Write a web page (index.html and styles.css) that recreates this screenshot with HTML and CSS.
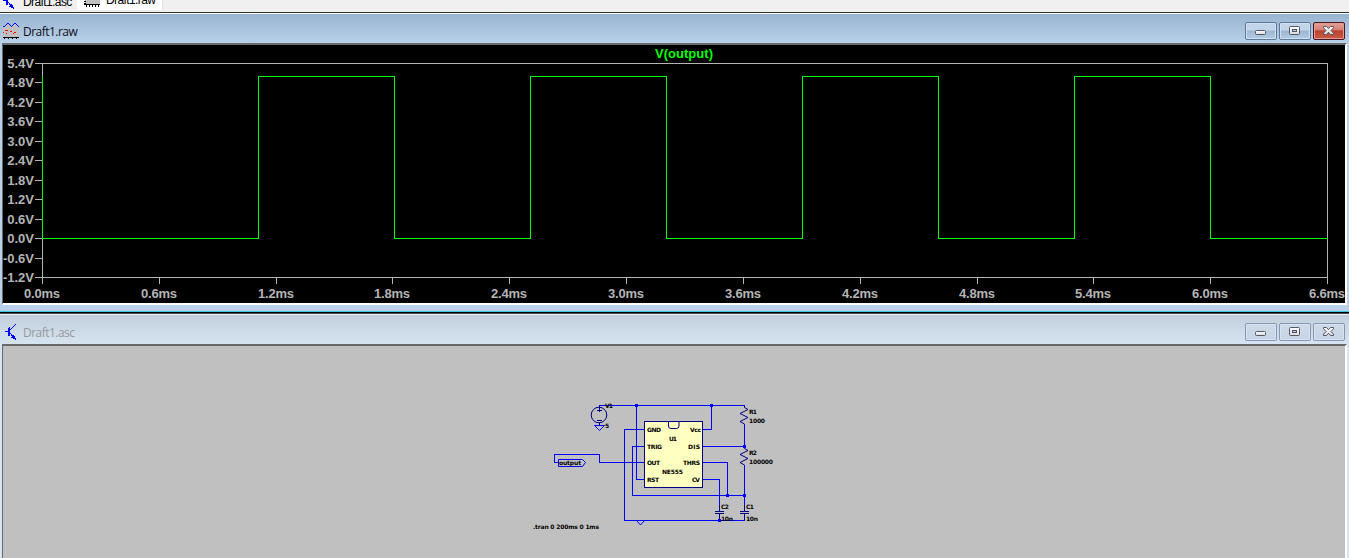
FILE: index.html
```html
<!DOCTYPE html>
<html lang="en">
<head>
<meta charset="utf-8">
<title>Draft1</title>
<link rel="stylesheet" href="styles.css">
</head>
<body>
<svg class="defs" width="0" height="0">
  <defs>
    <linearGradient id="face" x1="0" y1="0" x2="0" y2="1"><stop offset="0" stop-color="#fff"/><stop offset="1" stop-color="#d8d8d8"/></linearGradient>
    <g id="transistor" fill="#00f" shape-rendering="crispEdges">
      <path d="M0 7h4v1H0zM4 3h1v9H4zM3 4h1v8H3zM5 5h1v1H5zM6 4h1v1H6zM7 3h1v1H7zM8 2h1v1H8zM9 1h1v1H9zM10 0h1v1h-1zM5 9h1v1H5zM6 10h1v2H6zM7 11h2v2H7zM9 12h1v3H9zM6 13h3v1H6zM8 14h3v1H8zM10 15h1v1h-1z"/>
    </g>
    <g id="min"><rect x=".5" y=".5" width="10" height="4" rx="1" fill="url(#face)" stroke="#535666"/></g>
    <g id="max"><rect x=".5" y=".5" width="10" height="8" rx="1" fill="url(#face)" stroke="#535666"/><rect x="3.500" y="3.500" width="4" height="2" fill="#b5c9dc" stroke="#535666"/></g>
    <g id="close"><path d="M.5.5h3l2 2.200 2-2.200h3v1.300L8 4.500l2.500 2.700v1.300h-3l-2-2.200-2 2.200h-3V7.200L3 4.500.5 1.800z" fill="url(#face)" stroke="#535666"/></g>
    <g id="resistor"><path d="M0 0v2l3.500 2-8 4 8 4-8 4 4.500 2.500"/></g>
  </defs>
</svg>

<div class="tabs">
  <div class="tab"><svg class="tab-icon" width="16" height="16"><use href="#transistor"/></svg><span class="tab-text">Draft1.asc</span></div>
  <div class="tab tab-active"><svg class="tab-icon" width="17" height="16" shape-rendering="crispEdges"><path fill="#c0c0c0" d="M2 0h15v13H2z"/><path fill="#000" d="M1 13h16v1H1zM1 10h2v1H1zM1 12h2v1H1zM3 14h1v2H3zM6 14h1v2H6zM9 14h1v2H9zM12 14h1v2h-1zM15 14h1v2h-1z"/></svg><span class="tab-text">Draft1.raw</span></div>
</div>

<section class="window window-plot">
  <header class="titlebar">
    <svg class="win-icon" width="16" height="16" shape-rendering="crispEdges">
      <path fill="#c0c0c0" d="M0 3h16v12H0zM3 1h4v2H3zM10 1h4v2h-4z"/>
      <path fill="#00f" d="M0 3h2v1H0zM2 2h1v1H2zM3 1h1v1H3zM4 0h2v1H4zM6 1h1v1H6zM7 2h1v1H7zM8 3h1v1H8zM9 2h1v1H9zM10 1h1v1h-1zM11 0h2v1h-2zM13 1h1v1h-1zM14 2h1v1h-1zM15 3h1v1h-1z"/>
      <path fill="red" d="M2 7h3v1H2zM0 9h1v1H0zM7 8h2v1H7zM11 9h2v1h-2zM3 10h1v1H3zM10 10h1v1h-1z"/>
      <path fill="#000" d="M0 14h16v1H0zM1 15h1v1H1zM5 15h1v1H5zM9 15h1v1H9zM13 15h1v1h-1z"/>
    </svg>
    <span class="title">Draft1.raw</span>
    <div class="buttons">
      <span class="button"><svg width="11" height="5" class="glyph-min"><use href="#min"/></svg></span>
      <span class="button"><svg width="11" height="9"><use href="#max"/></svg></span>
      <span class="button button-close"><svg width="11" height="9"><use href="#close"/></svg></span>
    </div>
  </header>
  <div class="client client-plot">
    <svg class="plot" width="1342" height="258" viewBox="3 45 1342 258">
      <g class="axis" shape-rendering="crispEdges">
        <path d="M35 63.500H1327.500V284M42.500 63V284M35 277.500H1328"/>
        <path d="M35 82.500h7M35 102.500h7M35 121.500h7M35 141.500h7M35 160.500h7M35 180.500h7M35 199.500h7M35 219.500h7M35 238.500h7M35 258.500h7"/>
        <path d="M159.500 277v7M276.500 277v7M392.500 277v7M509.500 277v7M626.500 277v7M743.500 277v7M860.500 277v7M977.500 277v7M1093.500 277v7M1210.500 277v7"/>
      </g>
      <path class="trace" shape-rendering="crispEdges" d="M42.500 76V238.500H258.500V76.500H394.500V238.500H530.500V76.500H666.500V238.500H802.500V76.500H938.500V238.500H1074.500V76.500H1210.500V238.500H1328"/>
      <text class="trace-name" x="655" y="58" textLength="58">V(output)</text>
      <g class="label label-y">
        <text x="34" y="68">5.4V</text><text x="34" y="87">4.8V</text><text x="34" y="107">4.2V</text><text x="34" y="126">3.6V</text><text x="34" y="146">3.0V</text><text x="34" y="165">2.4V</text><text x="34" y="185">1.8V</text><text x="34" y="204">1.2V</text><text x="34" y="224">0.6V</text><text x="34" y="243">0.0V</text><text x="34" y="263">-0.6V</text><text x="34" y="282">-1.2V</text>
      </g>
      <g class="label label-x">
        <text x="42" y="298" textLength="36">0.0ms</text><text x="159" y="298" textLength="36">0.6ms</text><text x="276" y="298" textLength="36">1.2ms</text><text x="392" y="298" textLength="36">1.8ms</text><text x="509" y="298" textLength="36">2.4ms</text><text x="626" y="298" textLength="36">3.0ms</text><text x="743" y="298" textLength="36">3.6ms</text><text x="860" y="298" textLength="36">4.2ms</text><text x="977" y="298" textLength="36">4.8ms</text><text x="1093" y="298" textLength="36">5.4ms</text><text x="1210" y="298" textLength="36">6.0ms</text><text x="1327" y="298" textLength="36">6.6ms</text>
      </g>
    </svg>
  </div>
</section>

<section class="window window-schematic">
  <header class="titlebar">
    <svg class="win-icon" width="16" height="16"><use href="#transistor" x="2" y="0"/></svg>
    <span class="title">Draft1.asc</span>
    <div class="buttons">
      <span class="button"><svg width="11" height="5" class="glyph-min"><use href="#min"/></svg></span>
      <span class="button"><svg width="11" height="9"><use href="#max"/></svg></span>
      <span class="button"><svg width="11" height="9"><use href="#close"/></svg></span>
    </div>
  </header>
  <div class="client client-schematic">
    <svg class="schematic" width="1342" height="212" viewBox="3 346 1342 212">
      <rect class="chip" x="644.500" y="421.500" width="58" height="66" shape-rendering="crispEdges"/>
      <g class="part">
        <path d="M668.500 421.500v4.500q0 2.500 2.500 2.500h5.500q2.500 0 2.500-2.500v-4.500"/>
        <circle cx="599" cy="415" r="7.800"/>
        <path shape-rendering="crispEdges" d="M599.500 405v7M597 410.500h5M597 420.500h5M599.500 423v3"/>
        <use href="#resistor" x="744.500" y="405.500"/><use href="#resistor" x="744.500" y="446.500"/>
        <path shape-rendering="crispEdges" d="M715 511.500h9M715 513.500h9M719.500 504v7M719.500 514v6M740 511.500h9M740 513.500h9M744.500 504v7M744.500 514v6"/>
      </g>
      <g class="wire" shape-rendering="crispEdges">
        <path d="M599 405.500H745M636.500 405V479.500H644M644 429.500H624.500V520.500H745M644 446.500H632.500V495.500H745M644 462.500H599.500V454.500H554.500V462.500H558"/>
        <path d="M703 429.500H711.500V405M703 446.500H745M703 462.500H727.500V496M703 479.500H719.500V505M744.500 424V447M744.500 465V505"/>
      </g>
      <path class="wire" d="M558.500 459.500H582.500L585.500 462.500L582.500 466.500H558.500zM636.500 520.500l4 4.500 4-4.500M594.500 425.500h10l-5 5z"/>
      <path class="dot" d="M635 404h3v3h-3zM710 404h3v3h-3zM743 445h3v3h-3zM726 494h3v3h-3zM743 494h3v3h-3zM718 519h3v3h-3z"/>
      <g class="net">
        <text x="605" y="408" textLength="8">V1</text><text x="605" y="428" textLength="4">5</text>
        <text x="647" y="432" textLength="14">GND</text><text x="647" y="449" textLength="15">TRIG</text><text x="647" y="465" textLength="13">OUT</text><text x="647" y="482" textLength="12">RST</text>
        <text x="690" y="432" textLength="11">Vcc</text><text x="688" y="449" textLength="12">DIS</text><text x="683" y="465" textLength="17">THRS</text><text x="692" y="482" textLength="8">CV</text>
        <text x="669" y="441" textLength="8">U1</text><text x="662" y="474" textLength="21">NE555</text>
        <text x="749" y="414" textLength="8">R1</text><text x="749" y="423" textLength="16">1000</text><text x="749" y="455" textLength="8">R2</text><text x="749" y="464" textLength="24">100000</text>
        <text x="721" y="509" textLength="8">C2</text><text x="721" y="521" textLength="12">10n</text><text x="746" y="509" textLength="8">C1</text><text x="746" y="521" textLength="12">10n</text>
        <text x="559" y="465" textLength="22">output</text><text x="533" y="529" textLength="66">.tran 0 200ms 0 1ms</text>
      </g>
    </svg>
  </div>
</section>
</body>
</html>
```
FILE: styles.css
```css
* { box-sizing: border-box; }
body { margin: 0; width: 1349px; height: 558px; overflow: hidden; background: #b9d1ea; font-family: "Open Sans", sans-serif; }
svg { display: block; flex: none; }
.defs { position: absolute; }

.tabs { display: flex; height: 14px; background: #f0f0f0; border-bottom: 1px solid #fff; box-shadow: inset 0 -1px #323234; overflow: hidden; }
.tab { display: flex; width: 77px; height: 10px; padding-left: 3px; }
.tab-active { width: 86px; padding-left: 6px; background: #fff; border-right: 1px solid #e2e2e2; }
.tab-icon { margin-top: -7px; }
.tab-text { margin: -7px 0 0 4px; font: 12px/18px "Liberation Sans", sans-serif; letter-spacing: -.6px; color: #000; white-space: nowrap; }
.tab-active .tab-icon { margin-top: -9px; }
.tab-active .tab-text { margin-top: -9px; margin-left: 6px; }

.window { padding: 0 2px; }
.window-plot { height: 297px; background: linear-gradient(#99b4d1, #b9d1ea 29px); }
.window-schematic { height: 247px; border-top: 1px solid #3bc7e2; box-shadow: inset 0 1px #000, inset 0 2px #4c5257, inset 0 3px #e8edf2; background: linear-gradient(#bfcddb, #d7e4f2 33px); }
.titlebar { display: flex; align-items: center; height: 29px; padding: 5px 2px 0 1px; }
.window-schematic .titlebar { height: 32px; padding-top: 8px; }
.title { margin: 2px 0 0 4px; font-size: 12px; line-height: 18px; letter-spacing: -.52px; color: #101018; }
.window-schematic .title { color: #999; }
.buttons { display: flex; gap: 2px; margin-left: auto; }
.button { display: flex; align-items: center; justify-content: center; width: 32px; height: 18px; padding-right: 1px; padding-bottom: 1px; border: 1px solid #5f7899; border-radius: 2px; background: linear-gradient(#c2d4e8 0 46%, #9bb5d2 48%, #b4cce5); box-shadow: inset 0 0 0 1px #d0e1f2; }
.glyph-min { margin-top: 4px; }
.button-close { border-color: #4a1522; background: linear-gradient(#e5a299, #d77d70 45%, #b9402c 48%, #cc5b47); box-shadow: inset 0 0 0 1px #e09c90; }
.window-schematic .button { border-color: #8796b3; background: linear-gradient(#cedae8, #c5d4e5); box-shadow: inset 0 0 0 1px #d8e4f1; }

.client { border-top: 2px solid #696969; border-left: 1px solid #696969; border-right: 2px solid #fff; }
.client-plot { height: 262px; border-bottom: 2px solid #fff; background: #000; }
.client-schematic { height: 214px; background: #c0c0c0; }

.axis { fill: none; stroke: #b4b4b4; }
.trace { fill: none; stroke: #00ff00; }
.trace-name { font: bold 13px "Liberation Sans", sans-serif; fill: #00ff00; }
.label { font: bold 13px "Liberation Sans", sans-serif; fill: #b4b4b4; }
.label-y { text-anchor: end; }
.label-x { text-anchor: middle; }
.chip { fill: #ffffc0; stroke: #000080; }
.part { fill: none; stroke: #000080; }
.wire { fill: none; stroke: #0000ff; }
.dot { fill: #0000ff; }
.net { font: bold 6px "DejaVu Sans", sans-serif; fill: #000; }
```
